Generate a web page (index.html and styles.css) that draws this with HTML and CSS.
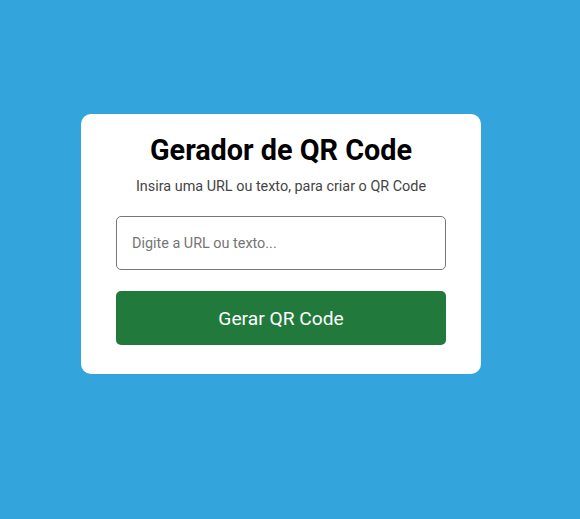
FILE: index.html
```html
<!DOCTYPE html>
<html lang="pt-BR">
<head>
<meta charset="utf-8">
<title>Gerador de QR Code</title>
<link rel="stylesheet" href="styles.css">
</head>
<body>
<div class="page">
  <div class="card">
    <h1 class="title">Gerador de QR Code</h1>
    <p class="subtitle">Insira uma URL ou texto, para criar o QR Code</p>
    <input class="field" type="text" placeholder="Digite a URL ou texto...">
    <button class="btn" type="button">Gerar QR Code</button>
  </div>
</div>
</body>
</html>
```
FILE: styles.css
```css
html, body {
  margin: 0;
  padding: 0;
}
body {
  background: #34a5dc;
  font-family: Roboto, "Liberation Sans", Arial, sans-serif;
  min-height: 519px;
}
.page {
  padding: 114px 0 0 81px;
}
.card {
  box-sizing: border-box;
  width: 400px;
  background: #ffffff;
  border-radius: 10px;
  padding: 19px 35px 29px;
  display: flex;
  flex-direction: column;
  align-items: stretch;
}
.title {
  margin: 0;
  font-size: 28.8px;
  line-height: 34px;
  font-weight: 700;
  color: #000;
  text-align: center;
}
.subtitle {
  margin: 10px 0 0;
  font-size: 14.4px;
  line-height: 20px;
  color: #444;
  text-align: center;
}
.field {
  box-sizing: border-box;
  margin-top: 19px;
  height: 54px;
  width: 100%;
  border: 1px solid #777;
  border-radius: 5px;
  padding: 0 15px;
  font-family: Roboto, "Liberation Sans", Arial, sans-serif;
  font-size: 14.4px;
  color: #333;
  background: #fff;
  outline: none;
}
.field::placeholder {
  color: #757575;
}
.btn {
  box-sizing: border-box;
  margin-top: 21px;
  height: 54px;
  width: 100%;
  border: none;
  border-radius: 5px;
  background: #217a3c;
  color: #fff;
  font-family: Roboto, "Liberation Sans", Arial, sans-serif;
  font-size: 19.2px;
  cursor: pointer;
}
```
